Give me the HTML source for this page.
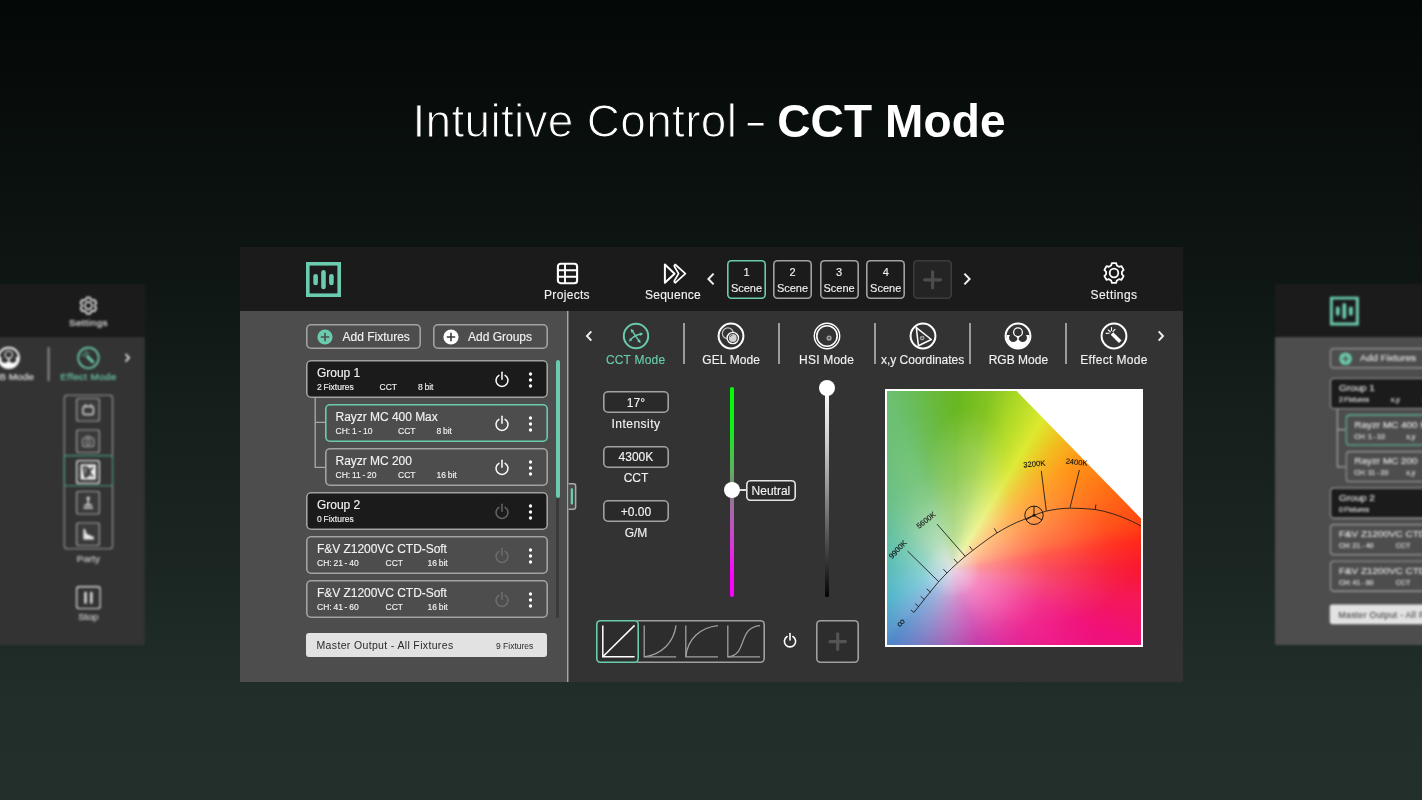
<!DOCTYPE html>
<html lang="en">
<head>
<meta charset="utf-8">
<title>Intuitive Control - CCT Mode</title>
<style>
*{box-sizing:border-box;margin:0;padding:0}
html,body{width:1422px;height:800px;overflow:hidden}
body{position:relative;font-family:"Liberation Sans",Arial,sans-serif;color:#fff;
 background:linear-gradient(180deg,#040807 0%,#0c1311 28%,#141e1b 50%,#18221f 62%,#212e2a 88%,#222f2b 100%)}
.abs{position:absolute}
#title{will-change:transform;position:absolute;left:0;top:93px;height:56px;line-height:56px;font-size:46px;white-space:nowrap;color:#fff}
#title span{position:absolute;top:0}
#title .l{left:412.5px;font-weight:400;-webkit-text-stroke:1.1px #090d0c;letter-spacing:0.3px}
#title .d{left:747.6px;font-weight:400;-webkit-text-stroke:1.1px #090d0c;transform:scaleX(1.55);transform-origin:50% 50%}
#title .b{left:777.2px;font-weight:700;letter-spacing:0.15px}
/* main panel */
#main{-webkit-text-stroke:0.14px currentColor}
#main{color:#f2f2f2;will-change:transform;position:absolute;left:240px;top:246.8px;width:942.8px;height:435px;background:#333;overflow:hidden}
#topbar{position:absolute;left:0;top:0;width:943px;height:64px;background:#1b1b1b}
#left{position:absolute;left:0;top:64px;width:327px;height:371px;background:#4d4d4d}
#vdiv{position:absolute;left:327px;top:64px;width:2px;height:371px;background:linear-gradient(90deg,#a6a6a6 0,#a6a6a6 1px,rgba(166,166,166,0.45) 1px,rgba(166,166,166,0.45) 2px)}
.t12{font-size:12px;line-height:14px;white-space:nowrap;position:absolute}
.c{text-align:center}
.teal{color:#6acbae}
.box{position:absolute;border:2px solid transparent;border-radius:5px}
.box::before,.row::before,.scene::before{content:"";position:absolute;left:-2px;top:-2px;right:-2px;bottom:-2px;border-radius:inherit;box-shadow:inset 0 0 0 1.6px var(--bc,#a2a2a2);pointer-events:none}
.row{position:absolute;height:38px;border:2px solid transparent;border-radius:5px}
.row.g{background:#1b1b1b}
.row.f{background:#4d4d4d}
.row.sel{--bc:#6acbae}
.row .n{position:absolute;left:9px;top:3.8px;font-size:12px;line-height:14px;white-space:nowrap;letter-spacing:-0.03px}
.row .s{position:absolute;margin-left:-0.5px;word-spacing:-0.6px;top:19.6px;font-size:8.5px;line-height:10px;white-space:nowrap}
.row svg{position:absolute}

.scene{position:absolute;top:13px;width:39px;height:39px;border:2px solid transparent;border-radius:4.5px;background:#1b1b1b;text-align:center;font-size:11px;color:#f0f0f0}
.scene.sel{--bc:#6acbae}
.scene.add{--bc:#3c3c3c;background:#242424}
.scene b{font-weight:400;position:absolute;left:0;right:0;top:3.6px;line-height:12px}
.scene i{font-style:normal;position:absolute;left:-2px;right:-2px;top:20px;line-height:12px}

#picker{position:absolute;left:644.8px;top:141.6px;width:258.6px;height:258.6px;border:2px solid #fff;background:#fff;overflow:hidden}
#pg{position:absolute;left:0;top:0;width:255px;height:255px;
 background:
  radial-gradient(circle 28px at 65px 178px, rgba(228,224,234,0.8) 0%, rgba(228,224,234,0.45) 40%, rgba(228,224,234,0) 100%),
  radial-gradient(circle 160px at 65px 178px, rgba(255,255,255,0.60) 0.0px, rgba(255,255,255,0.52) 20.0px, rgba(255,255,255,0.36) 45.0px, rgba(255,255,255,0.17) 77.0px, rgba(255,255,255,0.09) 95.0px, rgba(255,255,255,0.03) 130.0px, rgba(255,255,255,0.00) 160.0px),
  radial-gradient(ellipse 120px 80px at 138px 155px, rgba(255,255,255,0.17) 0%, rgba(255,255,255,0.14) 35%, rgba(255,255,255,0.06) 70%, rgba(255,255,255,0.00) 100%),
  radial-gradient(ellipse 42px 75px at 80px 92px, rgba(255,255,255,0.20) 0%, rgba(255,255,255,0.15) 45%, rgba(255,255,255,0) 100%),
  conic-gradient(from 0deg at 65px 178px, rgb(104,184,39) 0deg, rgb(104,184,32) 1.9deg, rgb(132,196,34) 12.1deg, rgb(170,216,38) 20.1deg, rgb(221,233,46) 31.1deg, rgb(240,192,32) 39.1deg, rgb(255,154,24) 48.1deg, rgb(255,112,20) 62.6deg, rgb(255,72,16) 75.3deg, rgb(255,39,23) 81.6deg, rgb(248,24,48) 89.7deg, rgb(244,24,88) 99.6deg, rgb(240,16,120) 112.1deg, rgb(238,18,133) 125.5deg, rgb(221,19,142) 143.0deg, rgb(190,21,153) 160.0deg, rgb(150,63,169) 181.5deg, rgb(98,102,186) 202.6deg, rgb(60,123,195) 220.2deg, rgb(64,137,198) 225.4deg, rgb(36,161,191) 244.5deg, rgb(35,167,161) 270.9deg, rgb(58,177,137) 297.6deg, rgb(88,185,124) 316.3deg, rgb(106,191,116) 333.1deg, rgb(108,192,112) 339.9deg, rgb(106,189,96) 345.2deg, rgb(104,186,64) 353.0deg, rgb(104,184,39) 360deg)}

.side{position:absolute;overflow:hidden;filter:blur(1.1px)}
.sp .row{--bc:#9a9a9a}.sp .row.sel{--bc:#62bfa3}.sp .btn{--bc:#9a9a9a}
.sp .n,.sp .s,.sp .btn .t12{transform:translateY(-0.7px)}
.sp div.t12{transform:translateY(-1.6px)}
.sp{color:#e0e0e0;-webkit-text-stroke:0.2px currentColor;position:absolute;width:942px;height:435px;background:#333;transform:scale(0.83);transform-origin:0 0;overflow:hidden}
</style>
</head>
<body>
<div id="title"><span class="l">Intuitive Control </span><span class="d">-</span><span class="b"> CCT Mode</span></div>

<div id="main">

 <div id="topbar">
  <!-- logo -->
  <svg class="abs" style="left:66px;top:15px" width="36" height="36" viewBox="0 0 36 36">
   <rect x="1.8" y="1.8" width="31.4" height="31.4" fill="none" stroke="#6acbae" stroke-width="3.6"/>
   <rect x="7.3" y="12" width="4.6" height="11.2" rx="2.3" fill="#6acbae"/>
   <rect x="15.2" y="8" width="4.6" height="19.2" rx="2.3" fill="#6acbae"/>
   <rect x="23.1" y="12" width="4.6" height="11.2" rx="2.3" fill="#6acbae"/>
  </svg>
  <!-- projects -->
  <svg class="abs" style="left:316px;top:15px" width="24" height="23" viewBox="0 0 24 23">
   <rect x="1.9" y="1.7" width="19.2" height="19.5" rx="2.8" fill="none" stroke="#fff" stroke-width="2.1"/>
   <path d="M9 1.7V21.2M1.9 8.2H21.1M1.9 14.7H21.1" stroke="#fff" stroke-width="1.9" fill="none"/>
  </svg>
  <div class="t12 c" style="left:297px;top:41px;width:60px;letter-spacing:0.32px">Projects</div>
  <!-- sequence -->
  <svg class="abs" style="left:422px;top:15px" width="25" height="23" viewBox="0 0 25 23">
   <path d="M2.9 2.5 L12.6 11.65 L2.9 20.8 Z" fill="none" stroke="#fff" stroke-width="2" stroke-linejoin="round"/><path d="M13.2 2.5 L23.4 11.65 L13.2 20.8 Q11.8 20 12.4 18.8 L16.6 11.65 L12.4 4.5 Q11.8 3.3 13.2 2.5 Z" fill="none" stroke="#fff" stroke-width="1.7" stroke-linejoin="round"/>
  </svg>
  <div class="t12 c" style="left:403px;top:41px;width:60px;letter-spacing:0.25px">Sequence</div>
  <!-- chevrons -->
  <svg class="abs" style="left:466px;top:25px" width="10" height="14" viewBox="0 0 10 14"><path d="M7.6 1.6 L2.4 7 L7.6 12.4" fill="none" stroke="#f0f0f0" stroke-width="2"/></svg>
  <svg class="abs" style="left:722px;top:25px" width="10" height="14" viewBox="0 0 10 14"><path d="M2.4 1.6 L7.6 7 L2.4 12.4" fill="none" stroke="#f0f0f0" stroke-width="2"/></svg>
  <!-- scenes -->
  <div class="scene sel" style="left:487px"><b>1</b><i>Scene</i></div>
  <div class="scene" style="left:533px"><b>2</b><i>Scene</i></div>
  <div class="scene" style="left:579.6px"><b>3</b><i>Scene</i></div>
  <div class="scene" style="left:626.2px"><b>4</b><i>Scene</i></div>
  <div class="scene add" style="left:673px"><svg width="36" height="36" viewBox="0 0 36 36" style="position:absolute;left:0;top:0"><path d="M17.6 9.8V25.8M9.6 17.8H25.6" stroke="#4c4c4c" stroke-width="3.2" stroke-linecap="round"/></svg></div>
  <!-- settings -->
  <svg class="abs" style="left:860.7px;top:13.2px" width="26" height="26" viewBox="0 0 26 26">
   <path id="gear" fill="none" stroke="#fff" stroke-width="1.8" stroke-linejoin="round" d="M10.13 5.53 L10.90 3.12 L15.10 3.12 L15.87 5.53 L18.03 6.78 L20.51 6.24 L22.61 9.88 L20.90 11.75 L20.90 14.25 L22.61 16.12 L20.51 19.76 L18.03 19.22 L15.87 20.47 L15.10 22.88 L10.90 22.88 L10.13 20.47 L7.97 19.22 L5.49 19.76 L3.39 16.12 L5.10 14.25 L5.10 11.75 L3.39 9.88 L5.49 6.24 L7.97 6.78 Z"/>
   <circle cx="13" cy="13" r="4.3" fill="none" stroke="#fff" stroke-width="1.8"/>
  </svg>
  <div class="t12 c" style="left:844px;top:41px;width:60px;letter-spacing:0.45px">Settings</div>
 </div>

 <div id="left">
  <div class="box btn" style="left:66px;top:13px;width:115px;height:25px">
   <svg class="abs" style="left:9.4px;top:2.6px" width="16" height="16" viewBox="0 0 16 16"><circle cx="8" cy="8" r="7.6" fill="#6acbae"/><path d="M8 3.8V12.2M3.8 8H12.2" stroke="#4d4d4d" stroke-width="1.6"/></svg>
   <span class="t12" style="left:34.5px;top:3.7px">Add Fixtures</span>
  </div>
  <div class="box btn" style="left:192.5px;top:13px;width:115px;height:25px">
   <svg class="abs" style="left:8.4px;top:2.6px" width="16" height="16" viewBox="0 0 16 16"><circle cx="8" cy="8" r="7.6" fill="#fff"/><path d="M8 3.8V12.2M3.8 8H12.2" stroke="#3a3a3a" stroke-width="1.6"/></svg>
   <span class="t12" style="left:33.5px;top:3.7px">Add Groups</span>
  </div>
  <!-- tree lines -->
  <svg class="abs" style="left:70px;top:80px" width="20" height="90" viewBox="0 0 20 90"><path d="M5.2 6.5V76.4H15M5.2 31.4H15" fill="none" stroke="#a6a6a6" stroke-width="1.4"/></svg>
  <div class="row g" style="left:66px;top:49px;width:242px"><span class="n">Group 1</span><span class="s" style="left:9.5px">2 Fixtures</span><span class="s" style="left:72px">CCT</span><span class="s" style="left:110.5px">8 bit</span><svg style="left:186px;top:9px" width="16" height="17" viewBox="0 0 16 17"><path d="M4.9 4.3 A6 6 0 1 0 11.1 4.3" fill="none" stroke="#fff" stroke-width="1.5" stroke-linecap="round"/><path d="M8 1.2V8.2" stroke="#fff" stroke-width="1.5" stroke-linecap="round"/></svg><svg style="right:13px;top:8.5px" width="5" height="18" viewBox="0 0 5 18"><circle cx="2.5" cy="3" r="1.65" fill="#fff"/><circle cx="2.5" cy="9" r="1.65" fill="#fff"/><circle cx="2.5" cy="15" r="1.65" fill="#fff"/></svg></div>
  <div class="row f sel" style="left:84.5px;top:93px;width:223.5px"><span class="n">Rayzr MC 400 Max</span><span class="s" style="left:9.5px">CH: 1 - 10</span><span class="s" style="left:72px">CCT</span><span class="s" style="left:110.5px">8 bit</span><svg style="left:167.5px;top:9px" width="16" height="17" viewBox="0 0 16 17"><path d="M4.9 4.3 A6 6 0 1 0 11.1 4.3" fill="none" stroke="#fff" stroke-width="1.5" stroke-linecap="round"/><path d="M8 1.2V8.2" stroke="#fff" stroke-width="1.5" stroke-linecap="round"/></svg><svg style="right:13px;top:8.5px" width="5" height="18" viewBox="0 0 5 18"><circle cx="2.5" cy="3" r="1.65" fill="#fff"/><circle cx="2.5" cy="9" r="1.65" fill="#fff"/><circle cx="2.5" cy="15" r="1.65" fill="#fff"/></svg></div>
  <div class="row f" style="left:84.5px;top:137px;width:223.5px"><span class="n">Rayzr MC 200</span><span class="s" style="left:9.5px">CH: 11 - 20</span><span class="s" style="left:72px">CCT</span><span class="s" style="left:110.5px">16 bit</span><svg style="left:167.5px;top:9px" width="16" height="17" viewBox="0 0 16 17"><path d="M4.9 4.3 A6 6 0 1 0 11.1 4.3" fill="none" stroke="#fff" stroke-width="1.5" stroke-linecap="round"/><path d="M8 1.2V8.2" stroke="#fff" stroke-width="1.5" stroke-linecap="round"/></svg><svg style="right:13px;top:8.5px" width="5" height="18" viewBox="0 0 5 18"><circle cx="2.5" cy="3" r="1.65" fill="#fff"/><circle cx="2.5" cy="9" r="1.65" fill="#fff"/><circle cx="2.5" cy="15" r="1.65" fill="#fff"/></svg></div>
  <div class="row g" style="left:66px;top:181px;width:242px"><span class="n">Group 2</span><span class="s" style="left:9.5px">0 Fixtures</span><svg style="left:186px;top:9px" width="16" height="17" viewBox="0 0 16 17"><path d="M4.9 4.3 A6 6 0 1 0 11.1 4.3" fill="none" stroke="#666" stroke-width="1.5" stroke-linecap="round"/><path d="M8 1.2V8.2" stroke="#666" stroke-width="1.5" stroke-linecap="round"/></svg><svg style="right:13px;top:8.5px" width="5" height="18" viewBox="0 0 5 18"><circle cx="2.5" cy="3" r="1.65" fill="#fff"/><circle cx="2.5" cy="9" r="1.65" fill="#fff"/><circle cx="2.5" cy="15" r="1.65" fill="#fff"/></svg></div>
  <div class="row f" style="left:66px;top:225px;width:242px"><span class="n" style="letter-spacing:-0.04px">F&amp;V Z1200VC CTD-Soft</span><span class="s" style="left:9.5px">CH: 21 - 40</span><span class="s" style="left:78px">CCT</span><span class="s" style="left:120px">16 bit</span><svg style="left:186px;top:9px" width="16" height="17" viewBox="0 0 16 17"><path d="M4.9 4.3 A6 6 0 1 0 11.1 4.3" fill="none" stroke="#6e6e6e" stroke-width="1.5" stroke-linecap="round"/><path d="M8 1.2V8.2" stroke="#6e6e6e" stroke-width="1.5" stroke-linecap="round"/></svg><svg style="right:13px;top:8.5px" width="5" height="18" viewBox="0 0 5 18"><circle cx="2.5" cy="3" r="1.65" fill="#fff"/><circle cx="2.5" cy="9" r="1.65" fill="#fff"/><circle cx="2.5" cy="15" r="1.65" fill="#fff"/></svg></div>
  <div class="row f" style="left:66px;top:269px;width:242px"><span class="n" style="letter-spacing:-0.04px">F&amp;V Z1200VC CTD-Soft</span><span class="s" style="left:9.5px">CH: 41 - 60</span><span class="s" style="left:78px">CCT</span><span class="s" style="left:120px">16 bit</span><svg style="left:186px;top:9px" width="16" height="17" viewBox="0 0 16 17"><path d="M4.9 4.3 A6 6 0 1 0 11.1 4.3" fill="none" stroke="#6e6e6e" stroke-width="1.5" stroke-linecap="round"/><path d="M8 1.2V8.2" stroke="#6e6e6e" stroke-width="1.5" stroke-linecap="round"/></svg><svg style="right:13px;top:8.5px" width="5" height="18" viewBox="0 0 5 18"><circle cx="2.5" cy="3" r="1.65" fill="#fff"/><circle cx="2.5" cy="9" r="1.65" fill="#fff"/><circle cx="2.5" cy="15" r="1.65" fill="#fff"/></svg></div>
  <!-- master -->
  <div class="abs" style="left:66px;top:322px;width:241px;height:24px;background:#e2e2e2;border-radius:3px;color:#2a2a2a;-webkit-text-stroke:0">
   <span class="abs" style="left:10.5px;top:5.5px;font-size:10.5px;line-height:12px;letter-spacing:0.35px;white-space:nowrap">Master Output - All Fixtures</span>
   <span class="abs" style="left:190px;top:7.6px;font-size:8.5px;line-height:10px;white-space:nowrap">9 Fixtures</span>
  </div>
  <!-- scrollbar -->
  <div class="abs" style="left:316.2px;top:49px;width:3px;height:258px;background:#3a3a3a;border-radius:1.5px"></div>
  <div class="abs" style="left:315.5px;top:49px;width:4.4px;height:137.5px;background:#6acbae;border-radius:2.2px"></div>
 </div>
 <div id="vdiv"></div>
 <svg class="abs" style="left:327px;top:235px" width="12" height="30" viewBox="0 0 12 30"><path d="M1.6 1.85 H6.4 Q8.65 1.85 8.65 4.1 V24.9 Q8.65 27.15 6.4 27.15 H1.6 Z" fill="#484848"/><path d="M1.6 1.85 H6.4 Q8.65 1.85 8.65 4.1 V24.9 Q8.65 27.15 6.4 27.15 H1.6" fill="none" stroke="#aaa" stroke-width="1.5"/><rect x="3.7" y="6.3" width="2.3" height="16.2" rx="0.8" fill="#6acbae"/></svg>

 <!-- mode row -->
 <svg class="abs" style="left:344px;top:82px" width="10" height="14" viewBox="0 0 10 14"><path d="M7.3 2.4 L3 7 L7.3 11.6" fill="none" stroke="#ececec" stroke-width="2"/></svg>
 <svg class="abs" style="left:916px;top:82px" width="10" height="14" viewBox="0 0 10 14"><path d="M2.7 2.4 L7 7 L2.7 11.6" fill="none" stroke="#ececec" stroke-width="2"/></svg>
  <svg class="abs" style="left:380.9px;top:73.9px" width="30" height="30" viewBox="0 0 30 30"><circle cx="15" cy="15" r="12.2" fill="none" stroke="#6acbae" stroke-width="2"/><path d="M11 9.6 L18.3 20.4" fill="none" stroke="#6acbae" stroke-width="1.5"/><path d="M9.4 18.9 Q13.2 13.9 20.4 12.9" fill="none" stroke="#6acbae" stroke-width="1.5"/><path d="M9.7 7.7 L13.2 9.7 L10.3 11.7 Z M19.6 22.3 L19.1 18.3 L16.1 20.3 Z M7.9 20.7 L11.4 19.3 L8.9 17 Z M22.3 12.4 L19.4 14.9 L18.6 11.6 Z" fill="#6acbae"/></svg>
  <div class="t12 c teal" style="left:340.6px;top:105.5px;width:110px;letter-spacing:0.2px">CCT Mode</div>
  <svg class="abs" style="left:476.2px;top:74.2px" width="30" height="30" viewBox="0 0 30 30"><circle cx="15" cy="15" r="12.4" fill="none" stroke="#fff" stroke-width="2"/><circle cx="11.9" cy="12.4" r="5.5" fill="none" stroke="#c4c4c4" stroke-width="1.2"/><circle cx="16.8" cy="17" r="5.7" fill="#333" stroke="#fff" stroke-width="1.3"/><circle cx="16.8" cy="17" r="3.9" fill="#d0d0d0"/><path d="M13.9 16.2 A3.2 3.2 0 0 1 16.6 14" stroke="#555" stroke-width="0.9" fill="none"/></svg>
  <div class="t12 c" style="left:436.2px;top:105.5px;width:110px;letter-spacing:0.1px">GEL Mode</div>
  <svg class="abs" style="left:571.6px;top:74.2px" width="30" height="30" viewBox="0 0 30 30"><circle cx="15" cy="15" r="12.7" fill="none" stroke="#fff" stroke-width="1.4"/><circle cx="15" cy="15" r="10.2" fill="none" stroke="#fff" stroke-width="1.6"/><circle cx="17.1" cy="17.1" r="1.8" fill="#444" stroke="#a0a0a0" stroke-width="1.6"/></svg>
  <div class="t12 c" style="left:531.6px;top:105.5px;width:110px;letter-spacing:0.2px">HSI Mode</div>
  <svg class="abs" style="left:667.6px;top:74.2px" width="30" height="30" viewBox="0 0 30 30"><circle cx="15" cy="15" r="12.4" fill="none" stroke="#fff" stroke-width="2"/><path d="M8.3 6.6 L23.3 18.5 L10.4 24.7 Z" fill="none" stroke="#fff" stroke-width="1.5" stroke-linejoin="round"/><circle cx="14.2" cy="17.1" r="1.7" fill="#444" stroke="#999" stroke-width="1.5"/></svg>
  <div class="t12 c" style="left:627.6px;top:105.5px;width:110px">x,y Coordinates</div>
  <svg class="abs" style="left:763.4px;top:74.2px" width="30" height="30" viewBox="0 0 30 30"><circle cx="15" cy="15" r="12.4" fill="none" stroke="#fff" stroke-width="2"/><path d="M3.6 14 A11.5 11.5 0 1 0 26.4 14 L22 14 L15 16 L8 14 Z" fill="#fff"/><circle cx="10.3" cy="16.8" r="4.3" fill="#333"/><circle cx="19.7" cy="16.8" r="4.3" fill="#333"/><circle cx="15" cy="11.2" r="4.4" fill="#333" stroke="#fff" stroke-width="1.3"/><path d="M12.6 14.2 Q15 16 17.4 14.2 L15 18.6 Z" fill="#fff"/></svg>
  <div class="t12 c" style="left:723.4px;top:105.5px;width:110px">RGB Mode</div>
  <svg class="abs" style="left:859px;top:74.2px" width="30" height="30" viewBox="0 0 30 30"><circle cx="15" cy="15" r="12.4" fill="none" stroke="#fff" stroke-width="2"/><path d="M13 12.6 L21.2 20.8" stroke="#fff" stroke-width="3.6" stroke-linecap="butt"/><path d="M11.4 11 L9.2 8.8 M12.4 9.4 L12.6 6.6 M10 12.2 L7.2 12.4 M14 10.4 L16 8.4" stroke="#fff" stroke-width="1.1" stroke-linecap="round"/></svg>
  <div class="t12 c" style="left:819px;top:105.5px;width:110px;letter-spacing:0.35px">Effect Mode</div>
  <div class="abs" style="left:442.5px;top:76px;width:2px;height:40.5px;background:#9c9c9c"></div>
  <div class="abs" style="left:538.0px;top:76px;width:2px;height:40.5px;background:#9c9c9c"></div>
  <div class="abs" style="left:633.7px;top:76px;width:2px;height:40.5px;background:#9c9c9c"></div>
  <div class="abs" style="left:729.4px;top:76px;width:2px;height:40.5px;background:#9c9c9c"></div>
  <div class="abs" style="left:824.8px;top:76px;width:2px;height:40.5px;background:#9c9c9c"></div>
  <div class="box" style="left:362.7px;top:144px;width:66.5px;height:22.4px;background:#2a2a2a"></div>
  <div class="t12 c" style="left:362.7px;top:148.8px;width:66.5px">17°</div>
  <div class="t12 c" style="left:355px;top:169.8px;width:82px;letter-spacing:0.5px">Intensity</div>
  <div class="box" style="left:362.7px;top:198.5px;width:66.5px;height:22.4px;background:#2a2a2a"></div>
  <div class="t12 c" style="left:362.7px;top:203.3px;width:66.5px">4300K</div>
  <div class="t12 c" style="left:355px;top:224.3px;width:82px">CCT</div>
  <div class="box" style="left:362.7px;top:253px;width:66.5px;height:22.4px;background:#2a2a2a"></div>
  <div class="t12 c" style="left:362.7px;top:257.8px;width:66.5px">+0.00</div>
  <div class="t12 c" style="left:355px;top:278.8px;width:82px">G/M</div>

 <!-- G/M slider -->
 <div class="abs" style="left:489.6px;top:140px;width:4.4px;height:210px;border-radius:2.2px;background:linear-gradient(180deg,#00ff00 0%,#12f01a 20%,#5fae62 40%,#808080 49%,#a569a5 58%,#d838d8 75%,#ff00ff 90%)"></div>
 <div class="abs" style="left:499px;top:242px;width:8px;height:1.6px;background:#ddd"></div>
 <div class="abs" style="left:483.7px;top:235px;width:16px;height:16px;border-radius:50%;background:#fff"></div>
 <div class="box" style="left:505.6px;top:233.4px;width:50.6px;height:20.4px;--bc:#e4e4e4;background:#2a2a2a;border-radius:4.5px"></div>
 <div class="t12 c" style="left:505.6px;top:237.2px;width:50.6px">Neutral</div>
 <!-- intensity slider -->
 <div class="abs" style="left:585.4px;top:141px;width:3.2px;height:209px;border-radius:1.6px;background:linear-gradient(180deg,#ffffff 0%,#d0d0d0 25%,#909090 50%,#4a4a4a 75%,#050505 100%)"></div>
 <div class="abs" style="left:579px;top:133px;width:16px;height:16px;border-radius:50%;background:#fff"></div>

 <!-- curve buttons -->
 <div class="box" style="left:355.6px;top:372.6px;width:169px;height:43px;background:#2d2d2d;--bc:#a0a0a0;border-radius:4.5px"></div>
 <div class="box" style="left:355.6px;top:372.6px;width:43.6px;height:43px;background:#2d2d2d;--bc:#6acbae;border-radius:4.5px"></div>
 <svg class="abs" style="left:355.6px;top:372.6px" width="169" height="43" viewBox="0 0 169 43">
  <g fill="none" stroke-width="1.3">
   <path d="M6.8 5.4V36.8H38.6" stroke="#fff" stroke-width="1.5"/>
   <path d="M6.8 36.8L38.6 5.4" stroke="#fff" stroke-width="1.5"/>
   <path d="M48.2 5.4V36.8H80.2" stroke="#a0a0a0"/>
   <path d="M48.2 36.8C66 34.5 78 22 80 5.4" stroke="#a0a0a0"/>
   <path d="M89.8 5.4V36.8H122" stroke="#a0a0a0"/>
   <path d="M89.8 36.8C91.5 19 104 7.5 122 5.6" stroke="#a0a0a0"/>
   <path d="M131.8 5.4V36.8H164" stroke="#a0a0a0"/>
   <path d="M131.8 36.8C152 35.5 141 7.5 164 5.6" stroke="#a0a0a0"/>
  </g>
 </svg>
 <!-- power -->
 <svg class="abs" style="left:542.4px;top:385.4px" width="16" height="17" viewBox="0 0 16 17"><path d="M5.1 4.5 A5.6 5.6 0 1 0 10.9 4.5" fill="none" stroke="#fff" stroke-width="1.6" stroke-linecap="round"/><path d="M8 1.6V8" stroke="#fff" stroke-width="1.6" stroke-linecap="round"/></svg>
 <!-- plus -->
 <div class="box" style="left:576px;top:373.2px;width:43.4px;height:43.2px;background:#2d2d2d;--bc:#a0a0a0;border-radius:4.5px"></div>
 <svg class="abs" style="left:576px;top:373.2px" width="43.4" height="43.2" viewBox="0 0 43.4 43.2"><path d="M21.7 13.8V29.4M13.9 21.6H29.5" stroke="#545454" stroke-width="3.1" stroke-linecap="round"/></svg>

 <!-- colour picker -->
 <div id="picker">
  <div id="pg"></div>
  <svg class="abs" style="left:0;top:0" width="255" height="255" viewBox="887 390 255 255">
   <path d="M1016.6 390 H1142 V518.4 Z" fill="#fff"/>
   <g fill="none" stroke="#161616" stroke-width="0.85">
    <path d="M910.8 609 L914 611.4 C922 601 930 591 938.4 581 C947 571.5 956 563 965 555.5 C975 547.5 985 540 995.8 532.7 C1005 527 1014 522 1024.5 518.3 C1032 515 1038 512.5 1045.8 510.2 C1054 508.3 1062 507.3 1070.2 507.2 C1079 507.2 1087 507.6 1095.2 508.5 C1107 510.5 1118 514 1129 519 C1134 521.3 1138 523.4 1142 525.6"/>
    <path d="M919 606 L915.2 602.6 M924.5 598.7 L920.7 595.3 M930.6 591.3 L926.8 587.9 M947 572 L943.4 568.2 M957.5 562 L954 558 M972.7 549.5 L969.6 545.3 M997 532 L994.4 527.4 M1095.2 508.5 L1095.9 503.6"/>
    <path d="M939 581 L907.6 550.1 M965.4 555.5 L937 523.1 M1046.3 509.8 L1041.3 469.9 M1070 506.8 L1079.4 469"/>
    <circle cx="1034" cy="514.3" r="9.2" stroke-width="0.95" stroke="#111"/>
    <path d="M1034 514.3 V505.1 M1034 514.3 L1026 518.9 M1034 514.3 L1042 518.9" stroke-width="0.95" stroke="#111"/>
   </g>
   <circle cx="1034" cy="514.3" r="1.4" fill="#111"/>
   <g font-family="Liberation Sans, Arial, sans-serif" font-size="7.6" fill="#101010" stroke="#101010" stroke-width="0.1">
    <text transform="translate(892 558.2) rotate(-46)">9900K</text>
    <text transform="translate(919 528) rotate(-38)">5600K</text>
    <text transform="translate(1023.6 466.4) rotate(-5)">3200K</text>
    <text transform="translate(1065.4 462.6) rotate(6)">2400K</text>
    <text transform="translate(900.4 627.6) rotate(-45)" font-size="12" stroke="none">∞</text>
   </g>
  </svg>
 </div>
</div>

<div class="side" style="left:-40px;top:274px;width:195px;height:381px">
 <div class="sp" style="left:-597.3px;top:10px">
  <div class="abs" style="left:0;top:0;width:942px;height:64px;background:#1b1b1b"></div>
  <svg class="abs" style="left:860.7px;top:13.2px" width="26" height="26" viewBox="0 0 26 26">
   <path id="gear" fill="none" stroke="#fff" stroke-width="1.8" stroke-linejoin="round" d="M10.13 5.53 L10.90 3.12 L15.10 3.12 L15.87 5.53 L18.03 6.78 L20.51 6.24 L22.61 9.88 L20.90 11.75 L20.90 14.25 L22.61 16.12 L20.51 19.76 L18.03 19.22 L15.87 20.47 L15.10 22.88 L10.90 22.88 L10.13 20.47 L7.97 19.22 L5.49 19.76 L3.39 16.12 L5.10 14.25 L5.10 11.75 L3.39 9.88 L5.49 6.24 L7.97 6.78 Z"/>
   <circle cx="13" cy="13" r="4.3" fill="none" stroke="#fff" stroke-width="1.8"/>
  </svg>
  <div class="t12 c" style="left:844px;top:41px;width:60px;letter-spacing:0.45px">Settings</div>
  <svg class="abs" style="left:763.4px;top:74.2px" width="30" height="30" viewBox="0 0 30 30"><circle cx="15" cy="15" r="12.4" fill="none" stroke="#fff" stroke-width="2"/><path d="M3.6 14 A11.5 11.5 0 1 0 26.4 14 L22 14 L15 16 L8 14 Z" fill="#fff"/><circle cx="10.3" cy="16.8" r="4.3" fill="#333"/><circle cx="19.7" cy="16.8" r="4.3" fill="#333"/><circle cx="15" cy="11.2" r="4.4" fill="#333" stroke="#fff" stroke-width="1.3"/><path d="M12.6 14.2 Q15 16 17.4 14.2 L15 18.6 Z" fill="#fff"/></svg>
  <div class="t12 c" style="left:723.4px;top:105.5px;width:110px">RGB Mode</div>
  <div class="abs" style="left:824.8px;top:76px;width:2px;height:40.5px;background:#9c9c9c"></div>
  <svg class="abs" style="left:859px;top:74.2px" width="30" height="30" viewBox="0 0 30 30"><circle cx="15" cy="15" r="12.4" fill="none" stroke="#6acbae" stroke-width="2"/><path d="M13 12.6 L21.2 20.8" stroke="#6acbae" stroke-width="3.6" stroke-linecap="butt"/><path d="M11.4 11 L9.2 8.8 M12.4 9.4 L12.6 6.6 M10 12.2 L7.2 12.4 M14 10.4 L16 8.4" stroke="#6acbae" stroke-width="1.1" stroke-linecap="round"/></svg>
  <div class="t12 c teal" style="left:819px;top:105.5px;width:110px;letter-spacing:0.35px">Effect Mode</div>
  <svg class="abs" style="left:916px;top:82px" width="10" height="14" viewBox="0 0 10 14"><path d="M2.7 2.4 L7 7 L2.7 11.6" fill="none" stroke="#ececec" stroke-width="2"/></svg>
  <div class="box" style="left:844px;top:132.5px;width:59.5px;height:187.7px;--bc:#9a9a9a;border-radius:5px"></div>
  <div class="box" style="left:844px;top:206.4px;width:59.5px;height:38px;--bc:#4a9a82;border-radius:3px"></div>
  <div class="box" style="left:858.8px;top:137.3px;width:29.5px;height:29px;--bc:#9a9a9a;background:#3a3a3a;border-radius:3.5px"></div><svg class="abs" style="left:858.8px;top:137.3px" width="29.5" height="29" viewBox="0 0 30 30"><rect x="8.5" y="11" width="13" height="10" rx="2" fill="none" stroke="#ddd" stroke-width="1.8"/><path d="M11 8 L13 11 M19 8 L17 11" stroke="#ddd" stroke-width="1.4"/></svg>
<div class="box" style="left:858.8px;top:174.6px;width:29.5px;height:29px;--bc:#9a9a9a;background:#3a3a3a;border-radius:3.5px"></div><svg class="abs" style="left:858.8px;top:174.6px" width="29.5" height="29" viewBox="0 0 30 30"><rect x="8" y="11" width="14" height="10.5" rx="2" fill="none" stroke="#999" stroke-width="1.6"/><circle cx="15" cy="16.2" r="2.8" fill="none" stroke="#999" stroke-width="1.4"/><path d="M12 11 L13 8.8 H17 L18 11" stroke="#999" stroke-width="1.4" fill="none"/></svg>
<div class="box" style="left:858.8px;top:212px;width:29.5px;height:29px;--bc:#e8e8e8;background:#3a3a3a;border-radius:3.5px"></div><svg class="abs" style="left:858.8px;top:212px" width="29.5" height="29" viewBox="0 0 30 30"><rect x="5.5" y="5.5" width="19" height="19" fill="#f2f2f2"/><path d="M9 9 H13 V21 H11 Z M15.5 9 L15.5 21 M21 9 L16 15 L21 21" stroke="#333" stroke-width="2.2" fill="none"/></svg>
<div class="box" style="left:858.8px;top:249.3px;width:29.5px;height:29px;--bc:#9a9a9a;background:#3a3a3a;border-radius:3.5px"></div><svg class="abs" style="left:858.8px;top:249.3px" width="29.5" height="29" viewBox="0 0 30 30"><path d="M15 8 V18 M10 18 H20 M9 21.5 H21" stroke="#ccc" stroke-width="2.2" fill="none"/><circle cx="15" cy="9.5" r="2.2" fill="#ccc"/></svg>
<div class="box" style="left:858.8px;top:286.6px;width:29.5px;height:29px;--bc:#9a9a9a;background:#3a3a3a;border-radius:3.5px"></div><svg class="abs" style="left:858.8px;top:286.6px" width="29.5" height="29" viewBox="0 0 30 30"><path d="M9 21.5 H22 V18.5 L13 14.5 L11 8 L9 8.6 Z" fill="#e8e8e8"/></svg>

  <div class="t12 c" style="left:834px;top:324.8px;width:80px;color:#ccc">Party</div>
  <div class="box" style="left:858.8px;top:363.6px;width:30px;height:28.5px;--bc:#d8d8d8;border-width:2px;border-radius:4px"></div>
  <div class="abs" style="left:868.6px;top:370.5px;width:3.4px;height:14.5px;background:#e0e0e0"></div>
  <div class="abs" style="left:875.8px;top:370.5px;width:3.4px;height:14.5px;background:#e0e0e0"></div>
  <div class="t12 c" style="left:834px;top:395.6px;width:80px;color:#ccc">Stop</div>
 </div>
</div>

<div class="side" style="left:1265px;top:274px;width:200px;height:381px">
 <div class="sp" style="left:10px;top:10px">
  <div class="abs" style="left:0;top:0;width:942px;height:64px;background:#1b1b1b"></div>
  <svg class="abs" style="left:66px;top:15px" width="36" height="36" viewBox="0 0 36 36">
   <rect x="1.8" y="1.8" width="31.4" height="31.4" fill="none" stroke="#6acbae" stroke-width="3.6"/>
   <rect x="7.3" y="12" width="4.6" height="11.2" rx="2.3" fill="#6acbae"/>
   <rect x="15.2" y="8" width="4.6" height="19.2" rx="2.3" fill="#6acbae"/>
   <rect x="23.1" y="12" width="4.6" height="11.2" rx="2.3" fill="#6acbae"/>
  </svg>
  <div class="abs" style="left:0;top:64px;width:327px;height:371px;background:#4d4d4d">
  <div class="box btn" style="left:66px;top:13px;width:115px;height:25px">
   <svg class="abs" style="left:9.4px;top:2.6px" width="16" height="16" viewBox="0 0 16 16"><circle cx="8" cy="8" r="7.6" fill="#6acbae"/><path d="M8 3.8V12.2M3.8 8H12.2" stroke="#4d4d4d" stroke-width="1.6"/></svg>
   <span class="t12" style="left:34.5px;top:3.7px">Add Fixtures</span>
  </div>
  <div class="box btn" style="left:192.5px;top:13px;width:115px;height:25px">
   <svg class="abs" style="left:8.4px;top:2.6px" width="16" height="16" viewBox="0 0 16 16"><circle cx="8" cy="8" r="7.6" fill="#fff"/><path d="M8 3.8V12.2M3.8 8H12.2" stroke="#3a3a3a" stroke-width="1.6"/></svg>
   <span class="t12" style="left:33.5px;top:3.7px">Add Groups</span>
  </div>
  <!-- tree lines -->
  <svg class="abs" style="left:70px;top:80px" width="20" height="90" viewBox="0 0 20 90"><path d="M5.2 6.5V76.4H15M5.2 31.4H15" fill="none" stroke="#a6a6a6" stroke-width="1.4"/></svg>
  <div class="row g" style="left:66px;top:49px;width:242px"><span class="n">Group 1</span><span class="s" style="left:9.5px">2 Fixtures</span><span class="s" style="left:72px">x,y</span><span class="s" style="left:110.5px">8 bit</span><svg style="left:186px;top:9px" width="16" height="17" viewBox="0 0 16 17"><path d="M4.9 4.3 A6 6 0 1 0 11.1 4.3" fill="none" stroke="#fff" stroke-width="1.5" stroke-linecap="round"/><path d="M8 1.2V8.2" stroke="#fff" stroke-width="1.5" stroke-linecap="round"/></svg><svg style="right:13px;top:8.5px" width="5" height="18" viewBox="0 0 5 18"><circle cx="2.5" cy="3" r="1.65" fill="#fff"/><circle cx="2.5" cy="9" r="1.65" fill="#fff"/><circle cx="2.5" cy="15" r="1.65" fill="#fff"/></svg></div>
  <div class="row f sel" style="left:84.5px;top:93px;width:223.5px"><span class="n">Rayzr MC 400 Max</span><span class="s" style="left:9.5px">CH: 1 - 10</span><span class="s" style="left:72px">x,y</span><span class="s" style="left:110.5px">8 bit</span><svg style="left:167.5px;top:9px" width="16" height="17" viewBox="0 0 16 17"><path d="M4.9 4.3 A6 6 0 1 0 11.1 4.3" fill="none" stroke="#fff" stroke-width="1.5" stroke-linecap="round"/><path d="M8 1.2V8.2" stroke="#fff" stroke-width="1.5" stroke-linecap="round"/></svg><svg style="right:13px;top:8.5px" width="5" height="18" viewBox="0 0 5 18"><circle cx="2.5" cy="3" r="1.65" fill="#fff"/><circle cx="2.5" cy="9" r="1.65" fill="#fff"/><circle cx="2.5" cy="15" r="1.65" fill="#fff"/></svg></div>
  <div class="row f" style="left:84.5px;top:137px;width:223.5px"><span class="n">Rayzr MC 200</span><span class="s" style="left:9.5px">CH: 11 - 20</span><span class="s" style="left:72px">x,y</span><span class="s" style="left:110.5px">16 bit</span><svg style="left:167.5px;top:9px" width="16" height="17" viewBox="0 0 16 17"><path d="M4.9 4.3 A6 6 0 1 0 11.1 4.3" fill="none" stroke="#fff" stroke-width="1.5" stroke-linecap="round"/><path d="M8 1.2V8.2" stroke="#fff" stroke-width="1.5" stroke-linecap="round"/></svg><svg style="right:13px;top:8.5px" width="5" height="18" viewBox="0 0 5 18"><circle cx="2.5" cy="3" r="1.65" fill="#fff"/><circle cx="2.5" cy="9" r="1.65" fill="#fff"/><circle cx="2.5" cy="15" r="1.65" fill="#fff"/></svg></div>
  <div class="row g" style="left:66px;top:181px;width:242px"><span class="n">Group 2</span><span class="s" style="left:9.5px">0 Fixtures</span><svg style="left:186px;top:9px" width="16" height="17" viewBox="0 0 16 17"><path d="M4.9 4.3 A6 6 0 1 0 11.1 4.3" fill="none" stroke="#666" stroke-width="1.5" stroke-linecap="round"/><path d="M8 1.2V8.2" stroke="#666" stroke-width="1.5" stroke-linecap="round"/></svg><svg style="right:13px;top:8.5px" width="5" height="18" viewBox="0 0 5 18"><circle cx="2.5" cy="3" r="1.65" fill="#fff"/><circle cx="2.5" cy="9" r="1.65" fill="#fff"/><circle cx="2.5" cy="15" r="1.65" fill="#fff"/></svg></div>
  <div class="row f" style="left:66px;top:225px;width:242px"><span class="n" style="letter-spacing:-0.04px">F&amp;V Z1200VC CTD-Soft</span><span class="s" style="left:9.5px">CH: 21 - 40</span><span class="s" style="left:78px">CCT</span><span class="s" style="left:120px">16 bit</span><svg style="left:186px;top:9px" width="16" height="17" viewBox="0 0 16 17"><path d="M4.9 4.3 A6 6 0 1 0 11.1 4.3" fill="none" stroke="#6e6e6e" stroke-width="1.5" stroke-linecap="round"/><path d="M8 1.2V8.2" stroke="#6e6e6e" stroke-width="1.5" stroke-linecap="round"/></svg><svg style="right:13px;top:8.5px" width="5" height="18" viewBox="0 0 5 18"><circle cx="2.5" cy="3" r="1.65" fill="#fff"/><circle cx="2.5" cy="9" r="1.65" fill="#fff"/><circle cx="2.5" cy="15" r="1.65" fill="#fff"/></svg></div>
  <div class="row f" style="left:66px;top:269px;width:242px"><span class="n" style="letter-spacing:-0.04px">F&amp;V Z1200VC CTD-Soft</span><span class="s" style="left:9.5px">CH: 41 - 60</span><span class="s" style="left:78px">CCT</span><span class="s" style="left:120px">16 bit</span><svg style="left:186px;top:9px" width="16" height="17" viewBox="0 0 16 17"><path d="M4.9 4.3 A6 6 0 1 0 11.1 4.3" fill="none" stroke="#6e6e6e" stroke-width="1.5" stroke-linecap="round"/><path d="M8 1.2V8.2" stroke="#6e6e6e" stroke-width="1.5" stroke-linecap="round"/></svg><svg style="right:13px;top:8.5px" width="5" height="18" viewBox="0 0 5 18"><circle cx="2.5" cy="3" r="1.65" fill="#fff"/><circle cx="2.5" cy="9" r="1.65" fill="#fff"/><circle cx="2.5" cy="15" r="1.65" fill="#fff"/></svg></div>
  <!-- master -->
  <div class="abs" style="left:66px;top:322px;width:241px;height:24px;background:#e2e2e2;border-radius:3px;color:#2a2a2a;-webkit-text-stroke:0">
   <span class="abs" style="left:10.5px;top:5.5px;font-size:10.5px;line-height:12px;letter-spacing:0.35px;white-space:nowrap">Master Output - All Fixtures</span>
   <span class="abs" style="left:190px;top:7.6px;font-size:8.5px;line-height:10px;white-space:nowrap">9 Fixtures</span>
  </div>
  <!-- scrollbar -->
  <div class="abs" style="left:316.2px;top:49px;width:3px;height:258px;background:#3a3a3a;border-radius:1.5px"></div>
  <div class="abs" style="left:315.5px;top:49px;width:4.4px;height:137.5px;background:#6acbae;border-radius:2.2px"></div>
  </div>
 </div>
</div>
</body>
</html>
